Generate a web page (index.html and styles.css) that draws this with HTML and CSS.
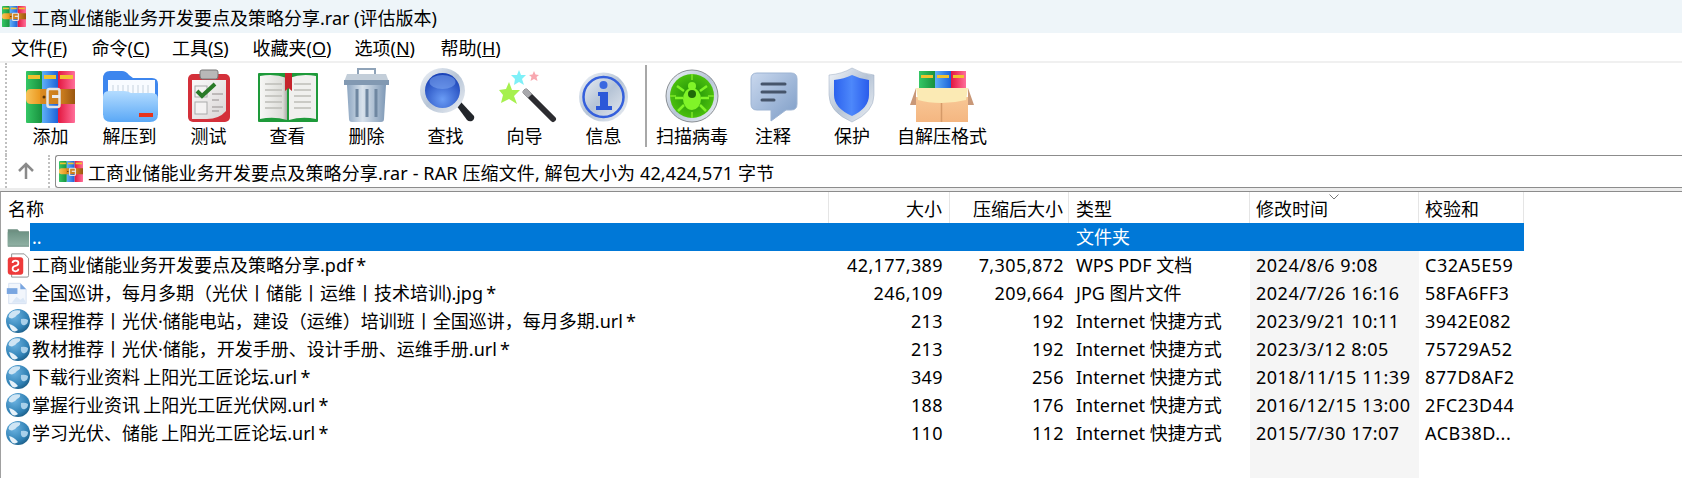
FILE: index.html
```html
<!DOCTYPE html>
<html lang="zh-CN">
<head>
    <meta charset="UTF-8">
    <title>工商业储能业务开发要点及策略分享.rar (评估版本)</title>
    <link rel="stylesheet" href="styles.css">
</head>
<body>
    <!-- shared gradients and repeated icons -->
    <svg class="icon-defs" aria-hidden="true">
        <defs>
            <linearGradient id="g-green" x1="0" x2="1" y1="0" y2="0"><stop offset="0" stop-color="#35c765"/><stop offset="1" stop-color="#18913e"/></linearGradient>
            <linearGradient id="g-blue" x1="0" x2="1" y1="0" y2="0"><stop offset="0" stop-color="#5fb0f8"/><stop offset="1" stop-color="#1c62d8"/></linearGradient>
            <linearGradient id="g-red" x1="0" x2="1" y1="0" y2="0"><stop offset="0" stop-color="#e3173f"/><stop offset="1" stop-color="#ff6f9a"/></linearGradient>
            <linearGradient id="g-belt" x1="0" x2="1" y1="0" y2="0"><stop offset="0" stop-color="#f8c45a"/><stop offset=".28" stop-color="#eb9a22"/><stop offset=".3" stop-color="#d98a20"/><stop offset=".75" stop-color="#c77a1c"/><stop offset="1" stop-color="#9a5610"/></linearGradient>
            <linearGradient id="g-folder" x1="0" x2="0" y1="0" y2="1"><stop offset="0" stop-color="#b4dcff"/><stop offset="1" stop-color="#5aa8f6"/></linearGradient>
            <linearGradient id="g-paper" x1="0" x2="1" y1="0" y2="1"><stop offset="0" stop-color="#fbfafa"/><stop offset="1" stop-color="#d9d5d5"/></linearGradient>
            <linearGradient id="g-page" x1="0" x2="1" y1="0" y2="0"><stop offset="0" stop-color="#f7f7f5"/><stop offset=".85" stop-color="#dcdcd8"/><stop offset="1" stop-color="#a9a9a5"/></linearGradient>
            <linearGradient id="g-metal" x1="0" x2="1" y1="0" y2="0"><stop offset="0" stop-color="#8ea7c2"/><stop offset=".4" stop-color="#d8e2ec"/><stop offset="1" stop-color="#7f99b6"/></linearGradient>
            <linearGradient id="g-silver" x1="0" x2="1" y1="0" y2="1"><stop offset="0" stop-color="#f2f5f9"/><stop offset=".5" stop-color="#b6c4d6"/><stop offset="1" stop-color="#eef1f5"/></linearGradient>
            <linearGradient id="g-bubble" x1="0" x2="1" y1="0" y2="1"><stop offset="0" stop-color="#c9d8ee"/><stop offset="1" stop-color="#7d9cc6"/></linearGradient>
            <linearGradient id="g-shield" x1="0" x2="1" y1="0" y2="0"><stop offset="0" stop-color="#2c62ee"/><stop offset=".5" stop-color="#4d88fb"/><stop offset="1" stop-color="#2a5cec"/></linearGradient>
            <linearGradient id="g-carton" x1="0" x2="0" y1="0" y2="1"><stop offset="0" stop-color="#f8c795"/><stop offset="1" stop-color="#f4b681"/></linearGradient>
            <linearGradient id="g-dir" x1="0" x2="0" y1="0" y2="1"><stop offset="0" stop-color="#6f9485"/><stop offset="1" stop-color="#8fb0a3"/></linearGradient>
            <radialGradient id="g-lens" cx=".5" cy=".75" r=".7"><stop offset="0" stop-color="#6a9cf5"/><stop offset="1" stop-color="#1c44b8"/></radialGradient>
            <radialGradient id="g-radar" cx=".5" cy=".5" r=".55"><stop offset="0" stop-color="#1c8c08"/><stop offset="1" stop-color="#4fc40e"/></radialGradient>
            <radialGradient id="g-globe" cx=".35" cy=".3" r=".8"><stop offset="0" stop-color="#6db4e2"/><stop offset=".7" stop-color="#2f80b4"/><stop offset="1" stop-color="#18577e"/></radialGradient>

            <symbol id="i-rar" viewBox="0 0 49 52" preserveAspectRatio="none">
                <rect width="16" height="52" rx="1" fill="url(#g-green)"/>
                <rect x="16" width="16" height="52" fill="url(#g-blue)"/>
                <rect x="32" width="17" height="52" rx="1" fill="url(#g-red)"/>
                <rect x="2" y="4" width="12" height="4" fill="#f0c22e"/>
                <rect x="18" y="4" width="12" height="4" fill="#f0c22e"/>
                <rect x="34" y="4" width="13" height="4" fill="#f0c22e"/>
                <path d="M5 18H49V33H5Q0 33 0 28V23Q0 18 5 18Z" fill="url(#g-belt)"/>
                <rect x="21.500" y="18" width="12" height="18" rx="2" fill="none" stroke="#e4e4e4" stroke-width="2.500"/>
                <rect x="26" y="24" width="8" height="3" fill="#ececec"/>
                <circle cx="18" cy="26" r="1.500" fill="#5a3406"/>
            </symbol>
            <symbol id="i-globe" viewBox="0 0 24 24">
                <circle cx="12" cy="12" r="12" fill="url(#g-globe)"/>
                <path d="M6 2.500Q10 .5 14 1.500Q15 4 11 6Q9 9 6 9.500Q3 9.500 2.500 7.500Q3 4.500 6 2.500Z" fill="#cfe5f4"/>
                <path d="M15 10Q19 9 22 11Q22 15 19 16Q17 17 15.500 15Q14.500 13 15 10Z" fill="#a8d0ea"/>
                <path d="M3 15Q8 16 12 21Q9 23.500 6 21.500Q4 19 3 15Z" fill="#e6f1f9"/>
            </symbol>
        </defs>
    </svg>

    <div class="title-bar">
        <svg class="title-icon"><use href="#i-rar"/></svg>
        <span>工商业储能业务开发要点及策略分享.rar (评估版本)</span>
    </div>

    <div class="menu-bar">
        <span class="menu-item">文件(<u>F</u>)</span>
        <span class="menu-item">命令(<u>C</u>)</span>
        <span class="menu-item">工具(<u>S</u>)</span>
        <span class="menu-item">收藏夹(<u>O</u>)</span>
        <span class="menu-item">选项(<u>N</u>)</span>
        <span class="menu-item">帮助(<u>H</u>)</span>
    </div>

    <div class="toolbar">
        <div class="gripper"></div>

        <div class="tool">
            <svg class="tool-icon" viewBox="0 0 64 56"><use href="#i-rar" x="7" y="4" width="49" height="52"/></svg>
            <span>添加</span>
        </div>
        <div class="tool">
            <svg class="tool-icon" viewBox="0 0 64 56">
                <path d="M5 12Q5 4 12 4H24Q28 4 31 8L35 11H54Q60 11 60 17V48H5Z" fill="#3d86ee"/>
                <rect x="10" y="13" width="47" height="28" fill="#f8fbff"/>
                <path d="M15 18V31M20 18V31M25 18V31M30 18V31M35 18V31M40 18V31M45 18V31M50 18V31" stroke="#c6d2de" stroke-width="1"/>
                <path d="M5 30Q5 24 11 24H26Q30 24 33 26H54Q60 26 60 32V47Q60 55 52 55H13Q5 55 5 47Z" fill="url(#g-folder)"/>
                <rect x="41" y="46" width="14" height="4" fill="#e8341a"/>
            </svg>
            <span>解压到</span>
        </div>
        <div class="tool">
            <svg class="tool-icon" viewBox="0 0 64 56">
                <rect x="11" y="7" width="42" height="48" rx="5" fill="#d4303a"/>
                <path d="M15 13H49V44Q42 52 30 52H15Z" fill="url(#g-paper)"/>
                <path d="M23 9V5Q23 3 25 3H39Q41 3 41 5V9Q41 12 39 12H25Q23 12 23 9Z" fill="#b8b8b8" stroke="#777" stroke-width="1"/>
                <rect x="18" y="19" width="12" height="11" fill="#f4f2f2" stroke="#aaa"/>
                <rect x="18" y="35" width="12" height="12" fill="#f4f2f2" stroke="#aaa"/>
                <path d="M20 24L25 29L38 17" fill="none" stroke="#2a7a28" stroke-width="4"/>
                <path d="M35 27H46M35 33H42M35 40H46M35 44H42" stroke="#b0aaaa" stroke-width="1.500"/>
            </svg>
            <span>测试</span>
        </div>
        <div class="tool">
            <svg class="tool-icon" viewBox="0 0 64 56">
                <rect x="2" y="6" width="60" height="49" rx="1" fill="#1e9a3a"/>
                <path d="M4 9Q18 6 31 11V53Q18 49 4 52Z" fill="url(#g-page)"/>
                <path d="M60 9Q46 6 33 11V53Q46 49 60 52Z" fill="#f0f0ee"/>
                <path d="M9 17H26M9 23H26M9 29H26M9 35H26M9 41H26M38 17H55M38 23H55M38 29H55M38 35H55M38 41H55" stroke="#bdbdb8" stroke-width="1.500"/>
                <path d="M29 6H36V24L32.500 21L29 24Z" fill="#c5242c"/>
            </svg>
            <span>查看</span>
        </div>
        <div class="tool">
            <svg class="tool-icon" viewBox="0 0 64 56">
                <path d="M23 7V2H40V7" fill="none" stroke="#8fa3b8" stroke-width="2"/>
                <path d="M12 7H51L54 15H9Z" fill="#c3ced9"/>
                <rect x="9" y="13" width="45" height="5" fill="#8299b2"/>
                <path d="M12 18H51L49 52Q49 55 46 55H17Q14 55 14 52Z" fill="url(#g-metal)"/>
                <path d="M22 22V50M32 22V50M41 22V50" stroke="#6f87a1" stroke-width="3"/>
            </svg>
            <span>删除</span>
        </div>
        <div class="tool">
            <svg class="tool-icon" viewBox="0 0 64 56">
                <path d="M42 38L46 34L60 49Q61 52 58 54Q55 55 53 53Z" fill="#23262b"/>
                <circle cx="28.500" cy="23.500" r="22.500" fill="url(#g-silver)"/>
                <circle cx="28.500" cy="23.500" r="17.500" fill="url(#g-lens)"/>
                <ellipse cx="28.500" cy="15" rx="13" ry="7" fill="#7ea5f0" opacity=".55"/>
            </svg>
            <span>查找</span>
        </div>
        <div class="tool">
            <svg class="tool-icon" viewBox="0 0 64 56">
                <path d="M16 15L19 23L27 23L21 29L24 37L16 32L8 36L10 28L6 23L13 22Z" fill="#a6f04e"/>
                <path d="M26 3L28 8L33 8L29 12L31 18L26 15L21 18L22 12L18 8L24 8Z" fill="#7ef0f8"/>
                <path d="M41 4L42.500 7.500L46 8L43.500 10L44.500 14L41 12L37.500 14L38.500 10L36 8L39.500 7.500Z" fill="#f8a8b0"/>
                <path d="M33 25L60 52" stroke="#2c2c30" stroke-width="6" stroke-linecap="round"/>
                <path d="M31 23L37 29" stroke="#a8a8ac" stroke-width="6"/>
            </svg>
            <span>向导</span>
        </div>
        <div class="tool">
            <svg class="tool-icon" viewBox="0 0 64 56">
                <circle cx="31.500" cy="30" r="24.500" fill="url(#g-silver)"/>
                <circle cx="31.500" cy="30" r="20" fill="none" stroke="#3560dc" stroke-width="2.500"/>
                <circle cx="31.500" cy="18" r="4" fill="#3a68e0"/>
                <path d="M26 25H36V39H40V43H24V39H28V29H26Z" fill="#2c58d8"/>
            </svg>
            <span>信息</span>
        </div>

        <div class="tool-sep"></div>

        <div class="tool tool-scan">
            <svg class="tool-icon" viewBox="0 0 64 56">
                <circle cx="32" cy="29" r="26" fill="url(#g-silver)" stroke="#8a8f94"/>
                <circle cx="32" cy="29" r="22" fill="url(#g-radar)"/>
                <path d="M32 7V13M32 45V51M10 29H16M48 29H54" stroke="#7fe82a" stroke-width="1.500"/>
                <ellipse cx="32" cy="32" rx="9" ry="11" fill="#80f428"/>
                <circle cx="32" cy="27" r="4" fill="#1f6a08"/>
                <circle cx="32" cy="19" r="4" fill="#80f428"/>
                <path d="M24 24L17 19M23 31H15M24 38L18 44M40 24L47 19M41 31H49M40 38L46 44" stroke="#80f428" stroke-width="2.500"/>
            </svg>
            <span>扫描病毒</span>
        </div>
        <div class="tool tool-note">
            <svg class="tool-icon" viewBox="0 0 64 56">
                <path d="M16 6H50Q56 6 56 12V37Q56 43 50 43H45L30 54V43H16Q10 43 10 37V12Q10 6 16 6Z" fill="url(#g-bubble)" stroke="#9db4d3"/>
                <path d="M21 17H44M21 25H44M21 33H33" stroke="#46556b" stroke-width="3" stroke-linecap="round"/>
            </svg>
            <span>注释</span>
        </div>
        <div class="tool tool-shield">
            <svg class="tool-icon" viewBox="0 0 64 56">
                <path d="M32 1Q42 7 54 8V28Q54 45 32 55Q9 45 9 28V8Q22 7 32 1Z" fill="url(#g-silver)" stroke="#9aabc0" stroke-width=".5"/>
                <path d="M32 8Q40 12 49 13V28Q49 41 32 49Q14 41 14 28V13Q24 12 32 8Z" fill="url(#g-shield)"/>
            </svg>
            <span>保护</span>
        </div>
        <div class="tool tool-sfx">
            <svg class="tool-icon" viewBox="0 0 64 56">
                <rect x="9" y="4" width="16" height="18" fill="url(#g-green)"/>
                <rect x="25" y="4" width="16" height="18" fill="url(#g-blue)"/>
                <rect x="41" y="4" width="15" height="18" fill="url(#g-red)"/>
                <rect x="11" y="8" width="12" height="3" fill="#f0c22e"/>
                <rect x="27" y="8" width="12" height="3" fill="#f0c22e"/>
                <rect x="43" y="8" width="11" height="3" fill="#f0c22e"/>
                <path d="M6 21L0 38H6ZM58 21L64 38H58Z" fill="#c99878"/>
                <rect x="6" y="30" width="52" height="25" fill="url(#g-carton)"/>
                <path d="M31.500 34V55" stroke="#d59a68" stroke-width="1.500"/>
                <path d="M6 21H58L56 33Q44 36 31.500 36Q18 36 8 33Z" fill="#fbeab4"/>
            </svg>
            <span>自解压格式</span>
        </div>
    </div>

    <div class="address-row">
        <div class="gripper"></div>
        <svg class="up-arrow" viewBox="0 0 20 20"><path d="M10 3V18M3 10L10 3L17 10" fill="none" stroke="#8a8a8a" stroke-width="2.500"/></svg>
        <div class="gripper"></div>
        <div class="address-box">
            <svg class="address-icon"><use href="#i-rar"/></svg>
            <span>工商业储能业务开发要点及策略分享.rar - RAR 压缩文件, 解包大小为 42,424,571 字节</span>
        </div>
    </div>

    <div class="file-list">
        <div class="cols list-head">
            <div class="head-cell head-name">名称</div>
            <div class="head-cell num">大小</div>
            <div class="head-cell num">压缩后大小</div>
            <div class="head-cell">类型</div>
            <div class="head-cell sort-col">修改时间<svg class="sort-mark" viewBox="0 0 10 6"><path d="M.5 .5L5 5L9.500 .5" fill="none" stroke="#777"/></svg></div>
            <div class="head-cell">校验和</div>
        </div>

        <div class="cols row row-selected">
            <div class="name-cell">
                <svg class="row-icon" viewBox="0 0 30 28"><path d="M7 6H17L19 8H29V24H7Z" fill="#6f9082"/><path d="M7 9H29V23H7Z" fill="url(#g-dir)"/></svg>
                <span class="name-text">..</span>
            </div>
            <div class="cell"></div>
            <div class="cell"></div>
            <div class="cell">文件夹</div>
            <div class="cell"></div>
            <div class="cell"></div>
        </div>

        <div class="cols row">
            <div class="name-cell">
                <svg class="row-icon" viewBox="0 0 30 28">
                    <path d="M11 2.500H24L28.500 7V25Q28.500 26.500 27 26.500H11Z" fill="#fff" stroke="#8f8f8f"/>
                    <rect x="7" y="6" width="16" height="18" rx="3" fill="#ee3a3a"/>
                    <path d="M12 12Q12 9.500 15 9.500Q18 9.500 18 12Q18 14.500 15 15Q12 15.500 12 18Q12 20.500 15 20.500Q18 20.500 18 18" fill="none" stroke="#fff" stroke-width="1.800"/>
                </svg>
                <span class="name-text">工商业储能业务开发要点及策略分享.pdf *</span>
            </div>
            <div class="cell num">42,177,389</div>
            <div class="cell num">7,305,872</div>
            <div class="cell">WPS PDF 文档</div>
            <div class="cell sort-col">2024/8/6 9:08</div>
            <div class="cell">C32A5E59</div>
        </div>

        <div class="cols row">
            <div class="name-cell">
                <svg class="row-icon" viewBox="0 0 30 28">
                    <path d="M8 4H20L26 10V25H8Z" fill="#f2f6fc" stroke="#d4e0f0"/>
                    <path d="M20 4L26 10H20Z" fill="#7aa6e0"/>
                    <rect x="6" y="9" width="11" height="6" fill="#7aa6e0"/>
                    <path d="M11 24L16 18L20 21L23 19L26 24Z" fill="#dbe7f6"/>
                </svg>
                <span class="name-text">全国巡讲，每月多期（光伏丨储能丨运维丨技术培训).jpg *</span>
            </div>
            <div class="cell num">246,109</div>
            <div class="cell num">209,664</div>
            <div class="cell">JPG 图片文件</div>
            <div class="cell sort-col">2024/7/26 16:16</div>
            <div class="cell">58FA6FF3</div>
        </div>

        <div class="cols row">
            <div class="name-cell">
                <svg class="row-icon row-globe"><use href="#i-globe"/></svg>
                <span class="name-text">课程推荐丨光伏·储能电站，建设（运维）培训班丨全国巡讲，每月多期.url *</span>
            </div>
            <div class="cell num">213</div>
            <div class="cell num">192</div>
            <div class="cell">Internet 快捷方式</div>
            <div class="cell sort-col">2023/9/21 10:11</div>
            <div class="cell">3942E082</div>
        </div>

        <div class="cols row">
            <div class="name-cell">
                <svg class="row-icon row-globe"><use href="#i-globe"/></svg>
                <span class="name-text">教材推荐丨光伏·储能，开发手册、设计手册、运维手册.url *</span>
            </div>
            <div class="cell num">213</div>
            <div class="cell num">192</div>
            <div class="cell">Internet 快捷方式</div>
            <div class="cell sort-col">2023/3/12 8:05</div>
            <div class="cell">75729A52</div>
        </div>

        <div class="cols row">
            <div class="name-cell">
                <svg class="row-icon row-globe"><use href="#i-globe"/></svg>
                <span class="name-text">下载行业资料 上阳光工匠论坛.url *</span>
            </div>
            <div class="cell num">349</div>
            <div class="cell num">256</div>
            <div class="cell">Internet 快捷方式</div>
            <div class="cell sort-col">2018/11/15 11:39</div>
            <div class="cell">877D8AF2</div>
        </div>

        <div class="cols row">
            <div class="name-cell">
                <svg class="row-icon row-globe"><use href="#i-globe"/></svg>
                <span class="name-text">掌握行业资讯 上阳光工匠光伏网.url *</span>
            </div>
            <div class="cell num">188</div>
            <div class="cell num">176</div>
            <div class="cell">Internet 快捷方式</div>
            <div class="cell sort-col">2016/12/15 13:00</div>
            <div class="cell">2FC23D44</div>
        </div>

        <div class="cols row">
            <div class="name-cell">
                <svg class="row-icon row-globe"><use href="#i-globe"/></svg>
                <span class="name-text">学习光伏、储能 上阳光工匠论坛.url *</span>
            </div>
            <div class="cell num">110</div>
            <div class="cell num">112</div>
            <div class="cell">Internet 快捷方式</div>
            <div class="cell sort-col">2015/7/30 17:07</div>
            <div class="cell">ACB38D...</div>
        </div>

        <div class="cols list-rest">
            <div></div><div></div><div></div><div></div>
            <div class="sort-col"></div>
        </div>
    </div>
</body>
</html>
```

FILE: styles.css
```css
html, body {
    margin: 0;
    padding: 0;
    height: 100%;
}

body {
    display: flex;
    flex-direction: column;
    height: 478px;
    overflow: hidden;
    background-color: #ffffff;
    color: #000000;
    font-family: "Noto Sans", "Noto Sans CJK SC", sans-serif;
    font-size: 18px;
}

.icon-defs {
    display: block;
    width: 0;
    height: 0;
}

.title-bar {
    display: flex;
    align-items: center;
    height: 33px;
    padding-left: 2px;
    gap: 6px;
    background-color: #eef5f9;
    flex-shrink: 0;
}

.title-icon {
    width: 24px;
    height: 21px;
}

.menu-bar {
    display: flex;
    align-items: center;
    height: 28px;
    padding-left: 11px;
    flex-shrink: 0;
    border-bottom: 2px solid #f0f0f0;
}

.menu-item {
    width: 80.5px;
}

.menu-item:nth-child(3) {
    width: 80.5px;
}

.menu-item:nth-child(4) {
    width: 102px;
}

.menu-item:nth-child(5) {
    width: 86px;
}

.toolbar {
    display: flex;
    height: 92px;
    flex-shrink: 0;
}

.gripper {
    width: 0;
    margin-left: 5px;
    border-left: 2px dotted #c0c0c0;
}

.toolbar .gripper {
    margin-right: 4px;
}

.tool {
    display: flex;
    flex-direction: column;
    align-items: center;
    width: 79px;
    padding-top: 4px;
    line-height: 26px;
    white-space: nowrap;
}

.tool-icon {
    display: block;
    width: 64px;
    height: 56px;
    flex-shrink: 0;
}

.tool-sep {
    width: 2px;
    height: 82px;
    margin: 2px 0 0 2px;
    background-color: #a8a8a8;
}

.tool-scan {
    width: 90px;
}

.tool-note {
    width: 72px;
}

.tool-shield {
    width: 86px;
}

.tool-sfx {
    width: 94px;
}

.address-row {
    display: flex;
    height: 33px;
    flex-shrink: 0;
    border-bottom: 3px solid #ececec;
}

.up-arrow {
    width: 20px;
    height: 20px;
    margin: 6px 12px 0 9px;
}

.address-row .up-arrow + .gripper {
    margin: 0 5px 0 0;
}

.address-box {
    display: flex;
    align-items: center;
    flex: 1;
    gap: 5px;
    height: 31px;
    padding-left: 3px;
    border: 1px solid #8c8c8c;
    border-right: 0;
    border-radius: 3px 0 0 3px;
    white-space: nowrap;
    letter-spacing: .12px;
}

.address-icon {
    width: 24px;
    height: 21px;
}

.file-list {
    display: flex;
    flex-direction: column;
    flex: 1;
    border-top: 1px solid #8c8c8c;
    border-left: 1px solid #a0a0a0;
}

.cols {
    display: grid;
    grid-template-columns: 828px 121px 119px 181px 169px 105px;
}

.list-head {
    height: 31px;
    line-height: 28px;
}

.head-cell {
    position: relative;
    padding: 3px 7px 0;
    border-right: 1px solid #e5e5e5;
    white-space: nowrap;
}

.head-cell:nth-child(3),
.cell:nth-child(3) {
    padding-right: 5px;
}

.head-cell:nth-child(n+5),
.cell:nth-child(n+5) {
    padding-left: 6px;
}

.num {
    text-align: right;
}

.row .num {
    letter-spacing: .4px;
}

.row .sort-col,
.row .cell:last-child {
    letter-spacing: .5px;
}

.sort-mark {
    position: absolute;
    top: 2px;
    left: 79px;
    width: 10px;
    height: 6px;
}

.row {
    height: 28px;
    line-height: 28px;
    white-space: nowrap;
}

.name-cell {
    display: flex;
    min-width: 0;
}

.row-icon {
    display: block;
    width: 29px;
    height: 28px;
    flex-shrink: 0;
}

.row-globe {
    width: 24px;
    height: 24px;
    margin: 2px 0 2px 5px;
}

.name-text {
    flex: 1;
    padding-left: 2px;
    word-spacing: -1.5px;
}

.cell {
    padding: 0 7px;
    overflow: hidden;
}

.sort-col {
    background-color: #f5f5f5;
}

.head-cell.sort-col {
    background-color: transparent;
}

.row-selected .cell,
.row-selected .name-text {
    background-color: #0078d7;
    color: #ffffff;
}

.list-rest {
    flex: 1;
}
```
